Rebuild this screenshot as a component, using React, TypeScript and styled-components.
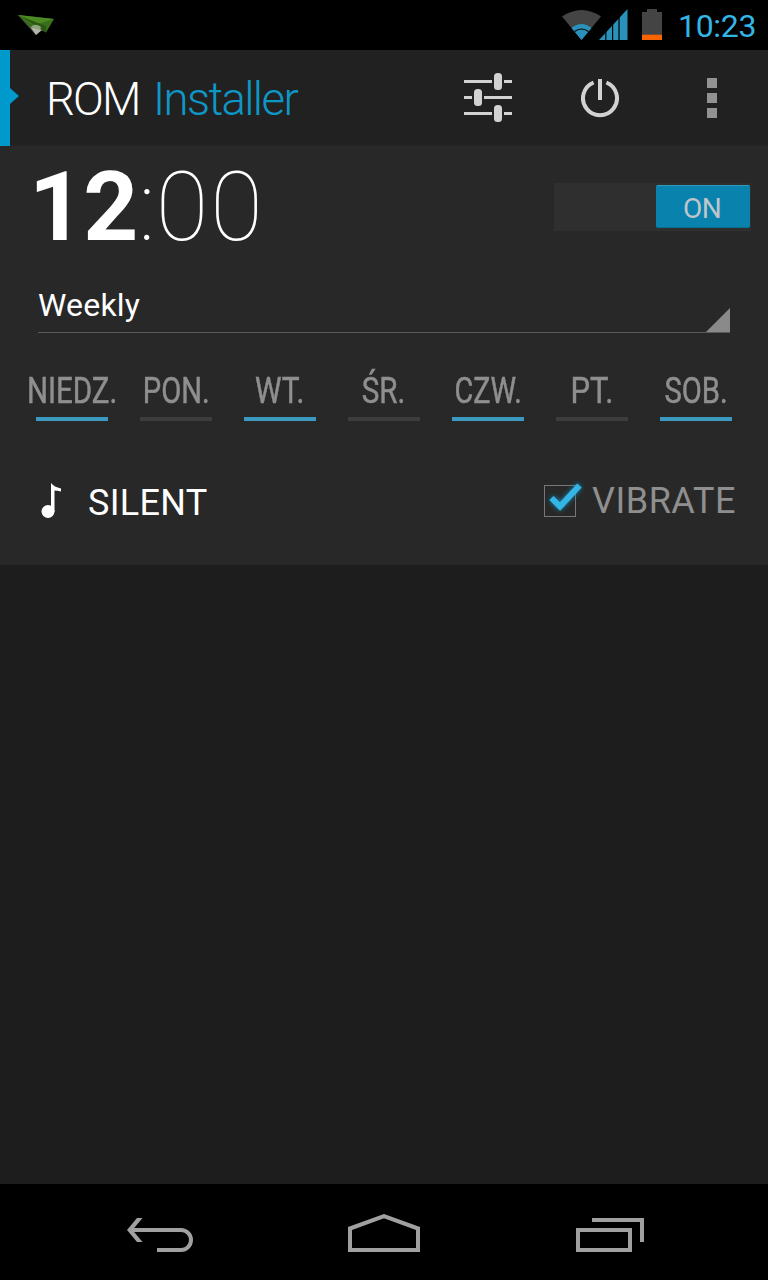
import React from "react";
import styled, { createGlobalStyle } from "styled-components";

const Global = createGlobalStyle`
  *, *::before, *::after { box-sizing: border-box; }
  html, body { margin: 0; background: #1d1d1d; }
  body { font-family: Roboto, "Liberation Sans", sans-serif; }
  svg { display: block; flex: none; }
`;

const Screen = styled.div`
  width: 768px;
  height: 1280px;
  display: flex;
  flex-direction: column;
  background: #1d1d1d;
  overflow: hidden;
`;

const StatusBar = styled.header`
  height: 50px;
  flex: none;
  display: flex;
  justify-content: space-between;
  background: #000;
`;

const StatusIcons = styled.div`
  display: flex;
  width: 206px;
`;

const StatusTime = styled.span`
  width: 91px;
  white-space: nowrap;
  font-size: 32px;
  line-height: 52px;
  color: #33b5e5;
  letter-spacing: -0.3px;
`;

const ActionBar = styled.div`
  height: 96px;
  flex: none;
  display: flex;
  align-items: center;
  background: #212121;
  border-bottom: 1px solid #242424;
`;

const DrawerHandle = styled.svg`
  width: 19px;
  height: 96px;
`;

const Title = styled.h1`
  flex: 1;
  margin: 0;
  padding: 5px 0 0 27px;
  font-size: 45.5px;
  line-height: 60px;
  font-weight: 300;
  letter-spacing: -1.8px;
  white-space: nowrap;
  color: #fff;
`;

const TitleAccent = styled.span`
  color: #0e97c6;
  margin-left: 4px;
  letter-spacing: -1.6px;
`;

const Action = styled.button`
  width: 112px;
  height: 96px;
  padding: 0;
  border: 0;
  background: none;
  display: flex;
  align-items: center;
  justify-content: center;
`;

const AlarmCard = styled.main`
  height: 419px;
  flex: none;
  background: #282828;
`;

const ClockRow = styled.section`
  height: 122px;
  display: flex;
  align-items: center;
  justify-content: space-between;
  padding: 0 17px 0 29px;
`;

const Clock = styled.div`
  font-size: 96px;
  line-height: 122px;
  font-weight: 100;
  color: #fff;
  white-space: nowrap;
`;

const Hours = styled.span`
  font-weight: 700;
  letter-spacing: -0.8px;
  margin-right: 1px;
`;

const Minutes = styled.span`
  letter-spacing: 2px;
`;

const Switch = styled.div`
  width: 197px;
  height: 48px;
  display: flex;
  justify-content: flex-end;
  padding: 2px 1px 3px 0;
  background: #2f2f2f;
`;

const SwitchThumb = styled.div`
  width: 94px;
  height: 43px;
  padding-right: 2px;
  border-radius: 2px;
  background: #0983ae;
  border-top: 1px solid #2e98bd;
  border-bottom: 1px solid #08708f;
  color: #bfc6ca;
  font-size: 28px;
  line-height: 46px;
  text-align: center;
  letter-spacing: -0.6px;
`;

const Spinner = styled.section`
  height: 65px;
  margin: 0 38px;
  display: flex;
  justify-content: space-between;
  align-items: flex-end;
  border-bottom: 1px solid #5a5a5a;
`;

const SpinnerLabel = styled.span`
  font-size: 32px;
  line-height: 54px;
  letter-spacing: 0.2px;
  color: #fff;
`;

const Days = styled.section`
  display: grid;
  grid-template-columns: repeat(7, 104px);
  padding: 37px 0 0 20px;
`;

const Day = styled.div<{ $on?: boolean }>`
  height: 51px;
  display: flex;
  flex-direction: column;
  align-items: center;
  justify-content: space-between;
  &::after {
    content: "";
    width: 72px;
    height: 4px;
    background: ${(p) => (p.$on ? "#3d9abf" : "#3d3d3d")};
  }
`;

const DayName = styled.span<{ $squeeze: number }>`
  font-size: 36px;
  line-height: 42px;
  color: #8f8f8f;
  -webkit-text-stroke: 0.5px #8f8f8f;
  white-space: nowrap;
  transform: scaleX(${(p) => p.$squeeze});
`;

const SoundRow = styled.section`
  height: 144px;
  display: flex;
  align-items: center;
  padding: 14px 20px 0 32px;
`;

const Ringtone = styled.span`
  flex: 1;
  margin: 5px 0 0 18px;
  font-size: 36px;
  line-height: 44px;
  letter-spacing: 0.3px;
  color: #fff;
`;

const VibrateLabel = styled.span`
  width: 156px;
  margin-top: 1px;
  font-size: 36px;
  line-height: 44px;
  letter-spacing: 0.5px;
  color: #8f8f8f;
`;

const NavBar = styled.nav`
  height: 96px;
  flex: none;
  margin-top: auto;
  display: flex;
  justify-content: center;
  background: #000;
`;

const NavButton = styled.button`
  width: 224px;
  height: 96px;
  padding: 0;
  border: 0;
  background: none;
  display: flex;
  justify-content: center;
`;

const days: { name: string; on: boolean; squeeze: number }[] = [
  { name: "NIEDZ.", on: true, squeeze: 0.82 },
  { name: "PON.", on: false, squeeze: 0.81 },
  { name: "WT.", on: true, squeeze: 0.83 },
  { name: "ŚR.", on: false, squeeze: 0.82 },
  { name: "CZW.", on: true, squeeze: 0.8 },
  { name: "PT.", on: false, squeeze: 0.86 },
  { name: "SOB.", on: true, squeeze: 0.81 },
];

const PaperPlane = () => (
  <svg width="60" height="50">
    <path d="M18 15L54 19L46 32.500L41 30L36 35Z" fill="#3a6f1a" />
    <path d="M18 15L54 19L34 25Z" fill="#4c8a22" />
    <path d="M18 15L32 28L36 35Z" fill="#4a4f45" />
    <path d="M20 16L46 26L46 32.500L41 29Z" fill="#2c5614" />
    <path d="M30.500 27L42 30L36 35Z" fill="#b4b4b0" />
    <path d="M31 27Q35 22.500 41 27L40 30Z" fill="#8fa67c" />
  </svg>
);

const SignalIcons = () => (
  <svg width="116" height="50">
    <path d="M0 16.500Q19.500 3.500 39 16.500L19.500 40Z" fill="#444" />
    <path d="M9.500 28Q19.500 20 29.500 28L19.500 40Z" fill="#2a91ba" />
    <path d="M12.500 31.500Q19.500 26.500 26.500 31.500" fill="none" stroke="#000" strokeWidth="1.200" />
    <path d="M37 40L65.500 9V40Z" fill="#2a91ba" />
    <path d="M43.800 28V41M50.600 20V41M57 14V41" stroke="#000" strokeWidth="1.200" />
    <path d="M80 12H85V9H95V12H100V35H80Z" fill="#444" />
    <path d="M80 34.700H100V40H80Z" fill="#f96300" />
  </svg>
);

export default function App() {
  return (
    <Screen>
      <Global />
      <StatusBar>
        <PaperPlane />
        <StatusIcons>
          <SignalIcons />
          <StatusTime>10:23</StatusTime>
        </StatusIcons>
      </StatusBar>

      <ActionBar>
        <DrawerHandle>
          <path d="M0 0H10V38L19 46L10 54V96H0Z" fill="#0099cc" />
        </DrawerHandle>
        <Title>
          ROM <TitleAccent>Installer</TitleAccent>
        </Title>
        <Action aria-label="Settings">
          <svg width="48" height="52" viewBox="0 2 48 52" fill="#d2d2d2">
            <path d="M0 10H28V13H0ZM40 10H48V13H40ZM0 26H8V29H0ZM20 26H48V29H20ZM0 42H28V45H0ZM40 42H48V45H40Z" />
            <rect x="30" y="3" width="8" height="17" rx="3.500" />
            <rect x="10" y="19" width="8" height="17" rx="3.500" />
            <rect x="30" y="35" width="8" height="17" rx="3.500" />
          </svg>
        </Action>
        <Action aria-label="Power">
          <svg width="40" height="42" viewBox="0 0 40 42" fill="none" stroke="#d2d2d2" strokeWidth="4">
            <path d="M20 2V23" />
            <path d="M13.600 5.500A17 17 0 1 0 26.400 5.500" />
          </svg>
        </Action>
        <Action aria-label="More">
          <svg width="10" height="40" fill="#929292">
            <path d="M0 0H10V10H0ZM0 15H10V25H0ZM0 30H10V40H0Z" />
          </svg>
        </Action>
      </ActionBar>

      <AlarmCard>
        <ClockRow>
          <Clock>
            <Hours>12</Hours>:<Minutes>00</Minutes>
          </Clock>
          <Switch>
            <SwitchThumb>ON</SwitchThumb>
          </Switch>
        </ClockRow>
        <Spinner>
          <SpinnerLabel>Weekly</SpinnerLabel>
          <svg width="24" height="24">
            <path d="M24 0V24H0Z" fill="#8a8a8a" />
          </svg>
        </Spinner>
        <Days>
          {days.map((d) => (
            <Day key={d.name} $on={d.on}>
              <DayName $squeeze={d.squeeze}>{d.name}</DayName>
            </Day>
          ))}
        </Days>
        <SoundRow>
          <svg width="38" height="40" viewBox="32 481 38 40" fill="#fff">
            <path d="M51 484Q54 488 61 489.500V492.500Q57 491.500 54.500 491.500V512.500H51Z" />
            <circle cx="48" cy="512.500" r="6.500" />
          </svg>
          <Ringtone>SILENT</Ringtone>
          <svg width="48" height="48" viewBox="544 476 48 48">
            <defs>
              <filter id="glow" x="-50%" y="-50%" width="200%" height="200%">
                <feGaussianBlur stdDeviation="2.500" />
              </filter>
            </defs>
            <rect x="544.500" y="485.500" width="31" height="31" fill="none" stroke="#777" />
            <path d="M551.500 498L560 506.500L579.500 485.500" fill="none" stroke="#178ab8" strokeWidth="6" filter="url(#glow)" />
            <path d="M551.500 498L560 506.500L579.500 485.500" fill="none" stroke="#33b5e5" strokeWidth="6" />
          </svg>
          <VibrateLabel>VIBRATE</VibrateLabel>
        </SoundRow>
      </AlarmCard>

      <NavBar>
        <NavButton aria-label="Back">
          <svg width="72" height="96" viewBox="124 1184 72 96" fill="none" stroke="#a0a0a0" strokeWidth="4">
            <path d="M130 1230H181A10 10 0 0 1 181 1250H157" />
            <path d="M142.500 1218H137L127 1230L137 1242H142.500L132.500 1230Z" fill="#a0a0a0" stroke="none" />
          </svg>
        </NavButton>
        <NavButton aria-label="Home">
          <svg width="72" height="96" viewBox="348 1184 72 96" fill="none" stroke="#a0a0a0" strokeWidth="4">
            <path d="M350 1228.500L384 1216.200L418 1228.500V1250H350Z" />
          </svg>
        </NavButton>
        <NavButton aria-label="Recent apps">
          <svg width="72" height="96" viewBox="572 1184 72 96" fill="none" stroke="#a0a0a0" strokeWidth="4">
            <path d="M578 1230H630V1250H578ZM592 1220H642V1242" />
          </svg>
        </NavButton>
      </NavBar>
    </Screen>
  );
}
